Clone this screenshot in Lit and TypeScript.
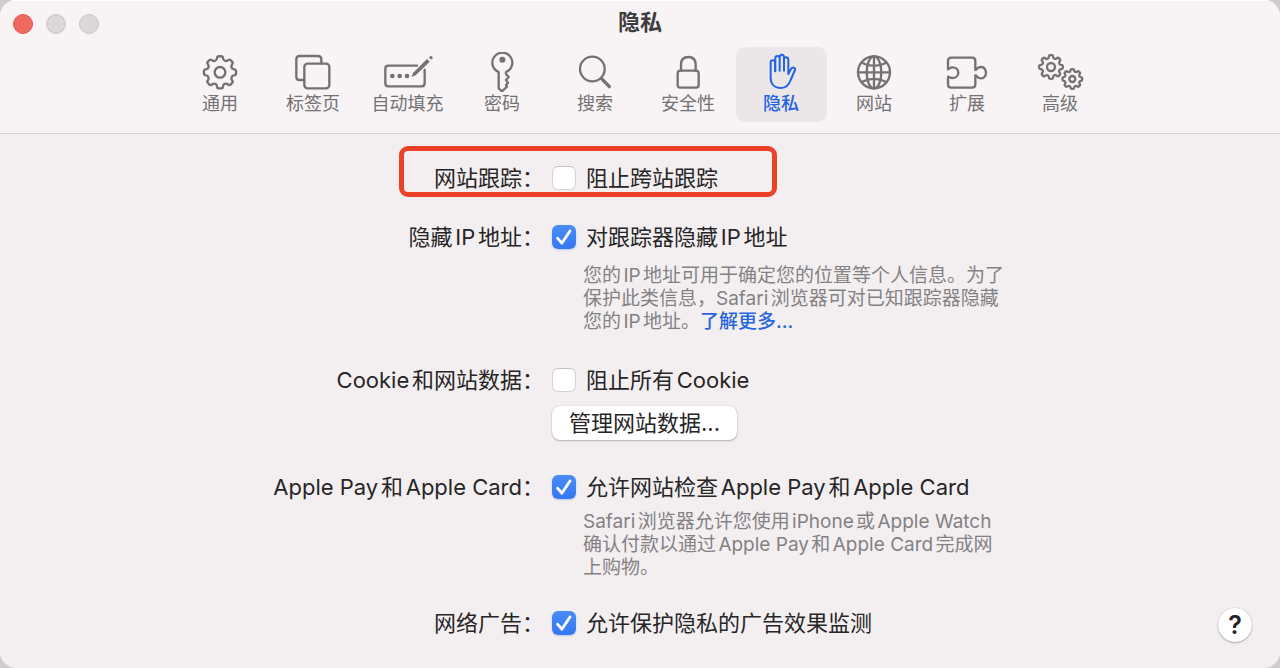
import { LitElement, html, svg, css, nothing } from "lit";
import type { TemplateResult, SVGTemplateResult } from "lit";
import { customElement, property, state } from "lit/decorators.js";
import { classMap } from "lit/directives/class-map.js";

type Point = [number, number];

/** Closed polygon whose corners are softened by quadratic curves. */
function softPolygon(points: Point[], radius: number): string {
  const n = points.length;
  const toward = (a: Point, b: Point): Point => {
    const d = Math.hypot(b[0] - a[0], b[1] - a[1]);
    const t = Math.min(0.5, radius / d);
    return [a[0] + (b[0] - a[0]) * t, a[1] + (b[1] - a[1]) * t];
  };
  const f = (p: Point) => `${p[0].toFixed(1)} ${p[1].toFixed(1)}`;
  return (
    points
      .map((p, i) => {
        const start = toward(p, points[(i + n - 1) % n]);
        const end = toward(p, points[(i + 1) % n]);
        return `${i ? "L" : "M"}${f(start)}Q${f(p)} ${f(end)}`;
      })
      .join("") + "Z"
  );
}

function gear(cx: number, cy: number, outer: number, root: number, hub: number): SVGTemplateResult {
  const teeth = 8;
  const points: Point[] = [];
  for (let i = 0; i < teeth; i++) {
    const mid = (i / teeth) * Math.PI * 2 - Math.PI / 2;
    const steps: [number, number][] = [
      [root, -0.25],
      [outer, -0.17],
      [outer, 0.17],
      [root, 0.25],
    ];
    for (const [r, a] of steps) {
      points.push([cx + r * Math.cos(mid + a), cy + r * Math.sin(mid + a)]);
    }
  }
  return svg`<path d=${softPolygon(points, outer / 9)} /><circle cx=${cx} cy=${cy} r=${hub} />`;
}

interface Tab {
  id: string;
  label: string;
  box: string;
  art: SVGTemplateResult;
}

const TABS: Tab[] = [
  { id: "general", label: "通用", box: "564 156 180 120", art: gear(654, 217, 49, 38, 16) },
  {
    id: "tabs",
    label: "标签页",
    box: "845 156 180 120",
    art: svg`<path d="M909 240H895Q885 240 885 230V178Q885 168 895 168H950Q960 168 960 178V190" />
      <rect x="909" y="191" width="75" height="74" rx="10" />`,
  },
  {
    id: "autofill",
    label: "自动填充",
    box: "49 36 180 120",
    art: svg`<path d="M166 77H80Q71 77 71 86V130Q71 139 80 139H180Q189 139 189 130V90" />
      <g class="solid"><circle cx="92" cy="108" r="7" /><circle cx="114" cy="108" r="7" /><circle cx="136" cy="108" r="7" />
      <path d="M150 111L154 99L196 57L204 65L162 106Z" /><circle cx="208" cy="53" r="5" /></g>`,
  },
  {
    id: "passwords",
    label: "密码",
    box: "335 36 180 120",
    art: svg`<path d="M415 96A30 30 0 1 1 437 96V102L445 111L437 120L443 128L437 135L440 140L425 154L415 145Z" />
      <circle class="solid" cx="426" cy="59" r="9" />`,
  },
  {
    id: "search",
    label: "搜索",
    box: "615 36 180 120",
    art: svg`<circle cx="697" cy="87" r="37" /><path class="heavy" d="M724 115L748 140" />`,
  },
  {
    id: "security",
    label: "安全性",
    box: "55 36 180 120",
    art: svg`<rect x="114" y="92" width="63" height="51" rx="8" />
      <path d="M124 92V74Q124 51 146 51Q168 51 168 74V92" />`,
  },
  {
    id: "privacy",
    label: "隐私",
    box: "334 36 180 120",
    art: svg`<path d="M406 94V66Q406 61 399 61Q393 61 393 68V113C393 133 406 144 424 144C439 144 448 134 453 120L466 90Q468 84 462 83Q457 82 454 87L446 102V60Q446 52 439 52Q433 52 433 59V92M433 60V52Q433 44 426 44Q420 44 420 52V92M420 54Q419 48 413 48Q407 48 407 55V94" />`,
  },
  {
    id: "websites",
    label: "网站",
    box: "615 36 180 120",
    art: svg`<circle cx="705" cy="97" r="48" /><ellipse cx="705" cy="97" rx="22" ry="48" />
      <path d="M705 49V145M657 97H753M668 68Q705 87 742 68M668 126Q705 107 742 126" />`,
  },
  {
    id: "extensions",
    label: "扩展",
    box: "298 36 180 120",
    art: svg`<path d="M331 88V63Q331 53 341 53H403Q413 53 413 63V90C417 90 417 84 424 82C436 78 445 86 445 98C445 110 436 118 424 114C417 112 417 106 413 106V133Q413 143 403 143H341Q331 143 331 133V110C336 110 336 114 344 114C355 114 362 107 362 98C362 89 355 82 344 82C336 82 336 88 331 88Z" />`,
  },
  {
    id: "advanced",
    label: "高级",
    box: "572 36 180 120",
    art: svg`${gear(635, 81, 36, 27, 12)}${gear(699, 117, 30, 23, 9)}`,
  },
];

@customElement("toolbar-tab")
class ToolbarTab extends LitElement {
  @property({ attribute: false }) tab!: Tab;
  @property({ type: Boolean }) selected = false;

  static styles = css`
    :host {
      display: block;
    }
    .tab {
      display: flex;
      flex-direction: column;
      align-items: center;
      min-width: 91px;
      padding: 5px 11px 6px;
      border: 0;
      border-radius: 9px;
      background: none;
      color: #737173;
      font: inherit;
      font-size: 18px;
      line-height: 24px;
      white-space: nowrap;
    }
    .selected {
      background: #ebe7e8;
      color: #2462e6;
      font-weight: 500;
    }
    .icon {
      width: 60px;
      height: 40px;
      fill: none;
      stroke: currentColor;
      stroke-width: 7;
      stroke-linejoin: round;
      stroke-linecap: round;
    }
    .selected .icon {
      stroke-width: 6;
    }
    .solid {
      fill: currentColor;
      stroke: none;
    }
    .heavy {
      stroke-width: 10;
    }
  `;

  render() {
    return html`<button
      class=${classMap({ tab: true, selected: this.selected })}
      type="button"
      aria-pressed=${this.selected ? "true" : "false"}
    >
      <svg class="icon" viewBox=${this.tab.box} aria-hidden="true">${this.tab.art}</svg>
      <span>${this.tab.label}</span>
    </button>`;
  }
}

interface Setting {
  id: string;
  title: string;
  option: string;
  checked: boolean;
  roomy?: boolean;
  marked?: boolean;
  note?: TemplateResult;
  action?: string;
}

const SETTINGS: Setting[] = [
  { id: "tracking", title: "网站跟踪：", option: "阻止跨站跟踪", checked: false, marked: true },
  {
    id: "hide-ip",
    title: "隐藏IP地址：",
    option: "对跟踪器隐藏IP地址",
    checked: true,
    roomy: true,
    note: html`您的IP地址可用于确定您的位置等个人信息。为了<br />保护此类信息，Safari浏览器可对已知跟踪器隐藏<br />您的IP地址。<a class="link" href="#more">了解更多...</a>`,
  },
  {
    id: "cookies",
    title: "Cookie和网站数据：",
    option: "阻止所有Cookie",
    checked: false,
    roomy: true,
    action: "管理网站数据...",
  },
  {
    id: "apple-pay",
    title: "Apple Pay和Apple Card：",
    option: "允许网站检查Apple Pay和Apple Card",
    checked: true,
    note: html`Safari浏览器允许您使用iPhone或Apple Watch<br />确认付款以通过Apple Pay和Apple Card完成网<br />上购物。`,
  },
  { id: "ads", title: "网络广告：", option: "允许保护隐私的广告效果监测", checked: true },
];

@customElement("app-root")
class AppRoot extends LitElement {
  @state() private active = "privacy";

  static styles = css`
    :host {
      display: block;
      background: #cfcdce;
      color: #272526;
      font-family: Inter, "Noto Sans CJK SC", sans-serif;
      font-size: 22px;
      line-height: 30px;
      text-autospace: normal;
    }
    .window {
      box-sizing: border-box;
      display: flex;
      flex-direction: column;
      min-height: 100vh;
      border-radius: 16px;
      overflow: hidden;
      background: #f3eff1;
    }
    .header {
      padding-bottom: 11px;
      border-bottom: 1px solid #d5d1d3;
      background: #f8f4f5;
      box-shadow: inset 0 1px #ffffff;
    }
    .titlebar {
      display: grid;
      grid-template-columns: 1fr auto 1fr;
      align-items: center;
      height: 47px;
      padding: 0 13px;
    }
    .lights {
      display: flex;
      gap: 13px;
    }
    .light {
      box-sizing: border-box;
      width: 20px;
      height: 20px;
      padding: 0;
      border: 1px solid #c9c5c7;
      border-radius: 50%;
      background: #dcd8da;
    }
    .close {
      border-color: #e0574c;
      background: #ee6a5f;
    }
    .title {
      align-self: start;
      margin: 0;
      color: #3f3d3e;
      font-size: 22px;
      font-weight: 700;
      line-height: 44px;
    }
    .tabs {
      display: flex;
      justify-content: center;
      gap: 2px;
    }
    .content {
      display: grid;
      flex: 1;
    }
    .form,
    .help {
      grid-area: 1 / 1;
    }
    .form {
      padding: 29px 0 24px;
    }
    .setting {
      position: relative;
      display: grid;
      grid-template-columns: 17fr 23fr;
      align-items: start;
      margin-bottom: 29px;
    }
    .roomy {
      margin-bottom: 32px;
    }
    .setting:last-child {
      margin-bottom: 0;
    }
    .name {
      text-align: right;
      white-space: nowrap;
    }
    .body {
      padding-left: 8px;
      white-space: nowrap;
    }
    .choice {
      display: flex;
      align-items: center;
      gap: 10px;
    }
    .check {
      appearance: none;
      box-sizing: border-box;
      flex: none;
      width: 24px;
      height: 24px;
      margin: 0;
      border: 1px solid #d6d2d4;
      border-top-color: #c4c0c2;
      border-radius: 6px;
      background: #ffffff;
    }
    .check:checked {
      border: 0;
      background: url("data:image/svg+xml,%3Csvg xmlns='http://www.w3.org/2000/svg' viewBox='0 0 24 24'%3E%3Cpath d='M5.5 13.2l4.3 5L18 6' fill='none' stroke='white' stroke-width='2.8' stroke-linecap='round' stroke-linejoin='round'/%3E%3C/svg%3E"),
        linear-gradient(#4a8cf7, #3577f2);
      box-shadow: 0 1px 2px rgba(53, 119, 242, 0.3);
    }
    .note {
      margin: 0;
      padding: 8px 0 0 31px;
      color: #848183;
      font-size: 19px;
      line-height: 23px;
    }
    .roomy .note {
      padding-top: 12px;
    }
    .link {
      color: #2864dc;
      font-weight: 500;
      text-decoration: none;
    }
    .action {
      display: block;
      height: 34px;
      margin-top: 11px;
      padding: 0 17px;
      border: 0;
      border-radius: 8px;
      background: #ffffff;
      box-shadow: 0 0 1px rgba(0, 0, 0, 0.25), 0 1px 2px rgba(0, 0, 0, 0.25);
      color: inherit;
      font: inherit;
      line-height: 34px;
    }
    .mark {
      position: absolute;
      top: -17px;
      right: calc(57.5% - 233px);
      box-sizing: border-box;
      width: 378px;
      height: 51px;
      border: 5px solid #eb4126;
      border-radius: 9px;
      pointer-events: none;
    }
    .help {
      align-self: end;
      justify-self: end;
      width: 34px;
      height: 34px;
      margin: 0 28px 26px 0;
      padding: 0;
      border: 0;
      border-radius: 50%;
      background: #ffffff;
      box-shadow: 0 0 1px rgba(0, 0, 0, 0.3), 0 1px 2px rgba(0, 0, 0, 0.25);
      color: #272526;
      font: inherit;
      font-size: 25px;
      font-weight: 600;
      line-height: 34px;
    }
  `;

  private renderSetting(s: Setting) {
    return html`<section class=${classMap({ setting: true, roomy: !!s.roomy })}>
      <span class="name" id="${s.id}-name">${s.title}</span>
      <div class="body" role="group" aria-labelledby="${s.id}-name">
        <label class="choice" for=${s.id}>
          <input class="check" type="checkbox" id=${s.id} ?checked=${s.checked} />
          <span>${s.option}</span>
        </label>
        ${s.note ? html`<p class="note">${s.note}</p>` : nothing}
        ${s.action ? html`<button class="action" type="button">${s.action}</button>` : nothing}
      </div>
      ${s.marked ? html`<div class="mark"></div>` : nothing}
    </section>`;
  }

  render() {
    return html`<div class="window">
      <header class="header">
        <div class="titlebar">
          <div class="lights">
            <button class="light close" type="button" aria-label="关闭"></button>
            <button class="light" type="button" aria-label="最小化" disabled></button>
            <button class="light" type="button" aria-label="缩放" disabled></button>
          </div>
          <h1 class="title">隐私</h1>
        </div>
        <nav class="tabs">
          ${TABS.map(
            (tab) => html`<toolbar-tab
              .tab=${tab}
              ?selected=${tab.id === this.active}
              @click=${() => (this.active = tab.id)}
            ></toolbar-tab>`
          )}
        </nav>
      </header>
      <main class="content">
        <form class="form">${SETTINGS.map((s) => this.renderSetting(s))}</form>
        <button class="help" type="button" aria-label="帮助">?</button>
      </main>
    </div>`;
  }
}
